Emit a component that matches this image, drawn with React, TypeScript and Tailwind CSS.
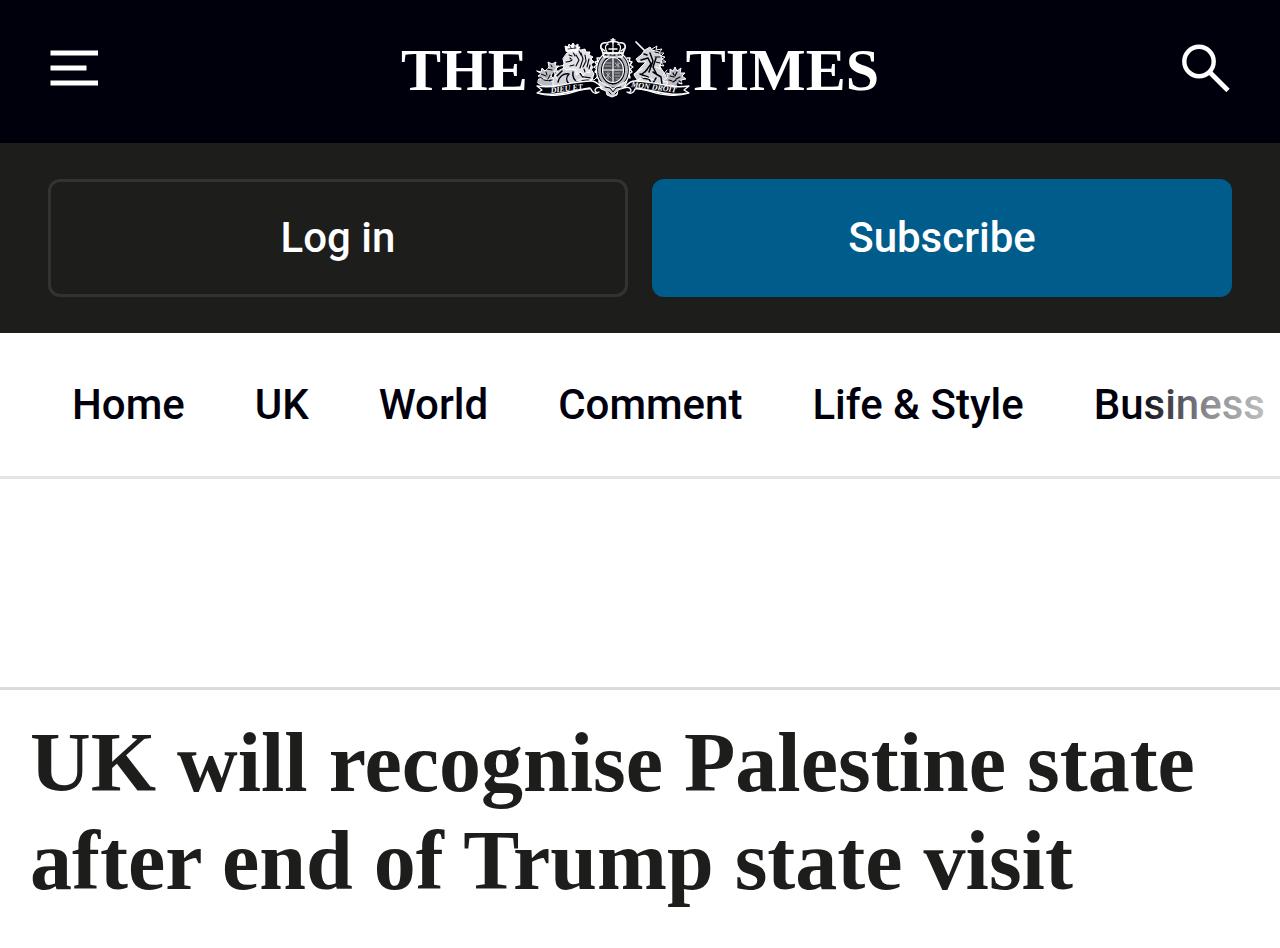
const sections = [
  { label: "Home", href: "#home" },
  { label: "UK", href: "#uk" },
  { label: "World", href: "#world" },
  { label: "Comment", href: "#comment" },
  { label: "Life & Style", href: "#life-style" },
  { label: "Business", href: "#business" },
];

function MenuIcon() {
  return (
    <svg width="48" height="36" viewBox="0 0 48 36" fill="#fff" aria-hidden="true">
      <rect x=".5" y=".5" width="47.5" height="5" />
      <rect x=".5" y="15.5" width="36" height="5" />
      <rect x=".5" y="30.5" width="47.5" height="5" />
    </svg>
  );
}

function SearchIcon() {
  return (
    <svg width="48" height="48" viewBox="0 0 48 48" fill="none" stroke="#fff" aria-hidden="true">
      <circle cx="17" cy="17.5" r="14.7" strokeWidth="4.4" />
      <path d="M27.5 28 46 46.5" strokeWidth="4.8" />
    </svg>
  );
}

function Crest() {
  return (
    <svg
      className="-mr-1 ml-2"
      width="154"
      height="60"
      viewBox="0 0 154 60"
      fill="none"
      stroke="#fff"
      strokeWidth="1"
      strokeLinecap="round"
      strokeLinejoin="round"
      aria-hidden="true"
    >
      {/* Roses on the left */}
      <g fill="#b9b9c2" stroke="#fff">
        <path d="M1 33l4 1 1-4 3 3 4-4-1-5 4 2 4-2-1 4 4 0-3 3 2 3-5 0-2 4 3 3-5 0-1 4-4-3-4 2 2-4-4-2 3-2z" />
        <path d="M3 41l5-1 5 4 6-2 4 4-7 2-9 0-5-3z" />
      </g>
      <path d="M5 36l5 2M11 31l5 1M8 42l6 1M14 37l-2 4M15 27l1 2M4 39l3 2M17 35l3 1M10 34l1 3M17 43l3 2" stroke="#00000c" />

      {/* Lion */}
      <path
        d="M17 47c-1-8 3-15 12-17l7 1 4-7 12 2 6 10-2 6-8 6-13 2-6-2z"
        fill="#d2d2d9"
      />
      <path d="M22 44c1-5 5-9 11-8-3 3-3 7 0 10M37 34c-1 5 2 9 6 11M43 34l4 5 7 1M26 33l-5 5M46 43l7-1" stroke="#00000c" strokeWidth="1.5" />
      <path d="M21 41l-3-7 3-5 7-2 7 1M40 43l8-3 10 2 3-3" />
      <path
        d="M31 15l8-4 6 1 4-1 1 3 4 0-1 3 4 2-2 2 3 3-3 2 2 4-4 1 1 4-4-1-3 4-2-4-5 3 0-5-5-1-5 1-3-3 1-4-1-4z"
        fill="#e2e2e7"
      />
      <path d="M33 17l3 1M36 22c-2 2-4 2-6 2M40 17l3 5-3 6M45 15l2 6-3 9M49 17l1 6-3 6M53 21l-2 8M38 27l-4 1M34 20l1 1M43 13l2 4M37 14l2 4M48 31l1 3M54 27l-1 4" stroke="#00000c" strokeWidth="1.1" />
      <path d="M30 13l-1-5 3 1 1-3 2 2 2-3 2 3 3-2 0 3 2 0-3 5z" fill="#fff" />
      <path d="M32 11l8-1M34 8l1 2M39 8v2" stroke="#00000c" strokeWidth=".8" />

      {/* Unicorn */}
      <path d="M100 4l9 9" strokeWidth="1.7" />
      <path
        d="M109 12l5-3 2 3 7 2 3 7-2 8 5 7 4 11-7 2-14-1-10-5-4-6 7-8 5-5-8 0-2-3 5-4z"
        fill="#d2d2d9"
      />
      <path d="M108 16l3 1M105 22l7-2 3 6-6 8M114 15l3 8-4 11M120 20l-3 9 4 8M104 36l8 3 3 6M117 34l8 5 1 7M111 32l-5 4M112 41l-6-1M120 40l-3 5" stroke="#00000c" strokeWidth="1.5" />
      <path d="M116 11l5-3-1 4 6-1-3 4 5 0-3 3 4 1-3 2 4 3-5 0 3 4-5-1 2 4-5-2M98 36l8-5M99 43l10-4 9 3M127 37l4-5" />
      <path d="M119 14l4 1M119 19l5 0M120 24l4 1" stroke="#00000c" />

      {/* Thistles on the right */}
      <path
        d="M131 35l3 1 0-5 3 2 2-4 2 4 4-3-1 5 5 0-3 3 4 3-5 1 1 4-4-1-3 5-3-3-6 1 2-4-5-1 4-3z"
        fill="#b9b9c2"
      />
      <path d="M134 38l4 1M141 34l-2 4M144 39l-4 2M137 44l3-2M133 42l3 1M145 44l-2-1M137 35l1 2M142 45l-1 2" stroke="#00000c" strokeWidth="1.2" />

      {/* Shield inside the garter */}
      <path d="M64 20l-3 0 1 3-3 1 2 3-3 2 3 2-2 3 3 2-1 4M91 20l3 0-1 3 3 1-2 3 3 2-3 2 2 3-3 2 1 4" strokeWidth="1.4" />
      <ellipse cx="77" cy="32" rx="16.5" ry="19" fill="#00000c" strokeWidth="1.3" />
      <ellipse cx="77" cy="32" rx="13.5" ry="16" stroke="#b9b9c2" strokeWidth="3" strokeDasharray="1.2 1.2" />
      <ellipse cx="77" cy="32" rx="10.5" ry="12.5" fill="#4a4a55" strokeWidth="1.1" />
      <path d="M77 20v24M67 32h20" strokeWidth="1.2" />
      <path d="M70 25h5M69 28h6M79 25l5 4M84 25l-5 4M82 24v6M70 35l5 5M74 35l-4 5M72 34v7M79 35h5M79 38h5M80 41h3" stroke="#b9b9c2" strokeWidth=".9" />
      <path d="M63 43l6 3 8 5 8-5 6-3-3 7-6 2-1 5-5 2-5-2-1-4-5-2z" fill="#d2d2d9" />
      <path d="M69 49l5 1 3 4 3-4 5-1M73 54l2 2M81 54l-2 2" stroke="#00000c" />

      {/* Crown */}
      <path d="M67 15l-2-5c-1-4 2-6 6-5 2-2 10-2 12 0 4-1 7 1 6 5l-2 5z" fill="#00000c" strokeWidth="1.6" />
      <path d="M71 14c-3-5-1-8 2-8M77 14V5M83 14c3-5 1-8-2-8" strokeWidth="1.3" strokeDasharray="1.6 1" />
      <path d="M67 15h20l-1 4H68zM77 0v5M75 2h4M65 10l4 3M89 10l-4 3M73 11h8" strokeWidth="1.5" />
      <path d="M70 17h1M74 17h1M78 17h1M82 17h1" stroke="#00000c" />

      {/* Motto scroll */}
      <path d="M1 48c7 1 13 1 19 0 11-2 24-5 35-5 6 0 8 4 11 7-3-1-6-1-7 2 0 2 2 3 4 2-4 3-7 0-8-3-11-1-20 6-33 6-8 1-15 0-21-2l5-3z" fill="#00000c" strokeWidth="1.3" />
      <path d="M153 48c-7 1-13 1-19 0-11-2-24-5-35-5-6 0-8 4-11 7 3-1 6-1 7 2 0 2-2 3-4 2 4 3 7 0 8-3 11-1 20 6 33 6 8 1 15 0 21-2l-5-3z" fill="#00000c" strokeWidth="1.3" />
      <path d="M2 55c17 4 31-2 52-5M152 55c-17 4-31-2-52-5" strokeWidth="1.6" />
      <g
        fill="#fff"
        stroke="none"
        fontFamily="'Liberation Serif', serif"
        fontSize="8"
        fontWeight="700"
        fontStyle="italic"
      >
        <text x="15" y="55" transform="rotate(-7 15 55)">DIEU ET</text>
        <text x="95" y="49" transform="rotate(7 95 49)">MON DROIT</text>
      </g>
    </svg>
  );
}

export default function App() {
  return (
    <div className="min-h-screen overflow-x-hidden bg-white font-['Roboto',sans-serif] text-[#00000c]">
      {/* Masthead */}
      <header className="flex h-[143px] items-center justify-between bg-[#00000c] px-[50px] pb-2">
        <button type="button" aria-label="Menu">
          <MenuIcon />
        </button>
        <a
          href="#home"
          aria-label="The Times"
          className="flex items-center font-['Liberation_Serif',serif] text-[60px] leading-none font-bold text-white"
        >
          <span className="pt-1">THE</span>
          <Crest />
          <span className="pt-1">TIMES</span>
        </a>
        <button type="button" aria-label="Search">
          <SearchIcon />
        </button>
      </header>

      {/* Account actions */}
      <div className="grid grid-cols-2 gap-6 bg-[#1d1d1b] px-12 py-9 text-[42px] font-medium text-white">
        <button
          type="button"
          className="h-[118px] rounded-xl border-3 border-[#333333] pb-0.5"
        >
          Log in
        </button>
        <button type="button" className="h-[118px] rounded-xl bg-[#005c8a] pb-0.5">
          Subscribe
        </button>
      </div>

      {/* Sections */}
      <nav className="relative border-b-3 border-[#e4e4e4]">
        <ul className="flex h-[143px] items-center gap-[70px] overflow-hidden px-[72px] text-[42px] font-medium whitespace-nowrap">
          {sections.map((section) => (
            <li key={section.label}>
              <a href={section.href}>{section.label}</a>
            </li>
          ))}
        </ul>
        <div className="pointer-events-none absolute inset-y-0 right-0 w-36 bg-linear-to-r from-white/0 via-white/55 to-white/80" />
      </nav>

      {/* Ad slot */}
      <div className="h-[211px] border-b-3 border-[#dbdbdb]" />

      <main className="px-[30px] pt-6">
        <h1 className="font-['Liberation_Serif',serif] text-[84px] leading-[98px] font-bold text-[#1d1d1b]">
          UK will recognise Palestine state after end of Trump state visit
        </h1>
      </main>
    </div>
  );
}
